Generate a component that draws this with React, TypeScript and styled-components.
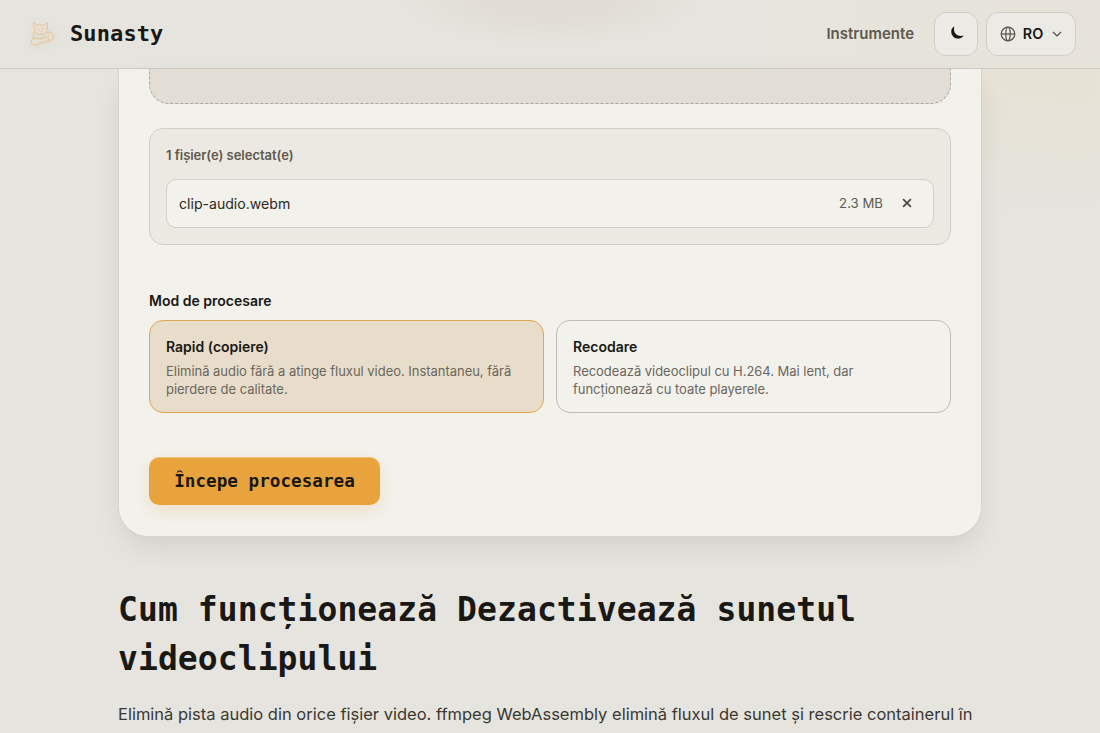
import React from 'react';
import styled, { createGlobalStyle } from 'styled-components';

const SANS = "Inter, 'Liberation Sans', sans-serif";
const MONO = "'DejaVu Sans Mono', 'Liberation Mono', monospace";

interface Mode {
  id: string;
  title: string;
  description: string;
}

const MODES: Mode[] = [
  {
    id: 'copy',
    title: 'Rapid (copiere)',
    description:
      'Elimină audio fără a atinge fluxul video. Instantaneu, fără pierdere de calitate.',
  },
  {
    id: 'encode',
    title: 'Recodare',
    description:
      'Recodează videoclipul cu H.264. Mai lent, dar funcționează cu toate playerele.',
  },
];

const CatLogo = () => (
  <CatSvg viewBox="0 0 28 30">
    <path d="M6.6 10.5 5.4 3.4l4.4 2.9c2-.5 4.2-.5 5.8 0l4-2.8-.6 6.8c.3 3-2.4 5.2-6.2 5.2-4 0-6.8-2.1-6.2-5Z" />
    <path d="m9 9.6 2 .7m5-.7-2 .7m-2.4 2 .9.6.9-.6" />
    <path d="M6.6 13.2c-1.500 2.200-1.700 4.800-.900 7m13.200-7.600c1.700 1.800 2.200 3.700 1.900 5.700" />
    <path d="M19.2 13.6c3.4-1.6 6.5.5 6 4.4-.4 2.6-2.6 4-5.8 4.200" />
    <path d="M3.700 20.400c2.400-1.700 4.900-1 7.600-.5 2.900.5 4.800-2.500 7.600-1.500 2.400.9 1.900 3.300-.7 4.200-3 1-5.700.8-8.300 2.600-2 1.400-5.200 1.100-6.100-.7-.7-1.400-.8-2.800-.1-4.100Z" />
  </CatSvg>
);

const App: React.FC = () => {
  const [mode, setMode] = React.useState('copy');

  return (
    <>
      <GlobalStyle />
      <Page>
        <Header>
          <Brand>
            <CatLogo />
            Sunasty
          </Brand>
          <Nav>
            <NavLink>Instrumente</NavLink>
            <ThemeButton title="Temă">
              <MoonSvg viewBox="0 0 16 16">
                <path d="M4.600 1.200C2.200 2.600.9 5.100 1.400 8.300c.6 3.700 3.600 6.200 7.100 6.200 2.600 0 4.900-1.200 6.100-3.400-2.900 1-6 .6-8.100-1.300C4.300 7.800 3.700 4.300 4.600 1.200Z" />
              </MoonSvg>
            </ThemeButton>
            <LanguageButton>
              <svg
                width="16"
                height="16"
                viewBox="0 0 16 16"
                fill="none"
                stroke="#5d594e"
                strokeWidth="1.3"
              >
                <circle cx="8" cy="8" r="6.8" />
                <ellipse cx="8" cy="8" rx="2.2" ry="6.8" />
                <path d="M1.2 8h13.6" />
              </svg>
              RO
              <svg
                width="10"
                height="6"
                viewBox="0 0 10 6"
                fill="none"
                stroke="#4a473e"
                strokeWidth="1.1"
              >
                <path d="m1 1 4 4 4-4" />
              </svg>
            </LanguageButton>
          </Nav>
        </Header>
        <Main>
          <ToolCard>
            <DropZone />
            <FilePanel>
              <FileCount>1 fișier(e) selectat(e)</FileCount>
              <FileRow>
                <FileName>clip-audio.webm</FileName>
                <FileSize>2.3 MB</FileSize>
                <RemoveButton title="Elimină">
                  <svg width="10" height="10" viewBox="0 0 10 10">
                    <path
                      d="m1.1 1.1 7.8 7.8m0-7.8L1.1 8.9"
                      stroke="#4a473e"
                      strokeWidth="1.7"
                    />
                  </svg>
                </RemoveButton>
              </FileRow>
            </FilePanel>
            <FieldLabel>Mod de procesare</FieldLabel>
            <ModeGrid>
              {MODES.map(({ id, title, description }) => (
                <ModeOption
                  key={id}
                  $active={mode === id}
                  onClick={() => setMode(id)}
                >
                  <ModeTitle>{title}</ModeTitle>
                  <ModeText>{description}</ModeText>
                </ModeOption>
              ))}
            </ModeGrid>
            <StartButton>Începe procesarea</StartButton>
          </ToolCard>
          <Heading>Cum funcționează Dezactivează sunetul videoclipului</Heading>
          <Intro>
            Elimină pista audio din orice fișier video. ffmpeg WebAssembly
            elimină fluxul de sunet și rescrie containerul în
          </Intro>
        </Main>
      </Page>
    </>
  );
};

export default App;

const GlobalStyle = createGlobalStyle`
  * {
    box-sizing: border-box;
  }

  body {
    margin: 0;
    font-family: ${SANS};
    color: #191814;
    background-color: #e5e4df;
  }

  button {
    font-family: inherit;
    color: inherit;
    padding: 0;
    cursor: pointer;
  }
`;

const Page = styled.div`
  height: 733px;
  overflow: hidden;
  background: radial-gradient(
      ellipse 340px 200px at 1070px 20px,
      #e8e2d4 0%,
      rgba(231, 226, 213, 0.8) 50%,
      rgba(229, 228, 223, 0) 100%
    ),
    #e5e4df;
`;

const Header = styled.header`
  display: flex;
  align-items: center;
  justify-content: space-between;
  height: 69px;
  padding: 0 24px 1px 28px;
  border-bottom: 1px solid #cbcac4;
  background: radial-gradient(
      ellipse 150px 46px at 550px 0,
      #e0dcd4 0%,
      rgba(224, 220, 212, 0.75) 50%,
      rgba(226, 225, 218, 0) 100%
    ),
    rgba(230, 229, 222, 0.6);
`;

const Brand = styled.div`
  display: flex;
  align-items: center;
  gap: 14px;
  font-family: ${MONO};
  font-size: 22px;
  font-weight: 700;
  letter-spacing: 0.1px;
`;

const CatSvg = styled.svg`
  width: 28px;
  height: 30px;
  fill: rgba(240, 226, 203, 0.35);
  stroke: #e9bd82;
  stroke-width: 0.8;
  filter: drop-shadow(0 2px 5px rgba(170, 160, 140, 0.3));
`;

const Nav = styled.nav`
  display: flex;
  align-items: center;
`;

const NavLink = styled.a`
  margin-right: 20px;
  font-size: 15px;
  font-weight: 600;
  color: #5d594e;
`;

const ThemeButton = styled.button`
  display: flex;
  align-items: center;
  justify-content: center;
  width: 44px;
  height: 44px;
  border: 1px solid #d0cec7;
  border-radius: 12px;
  background-color: #eceae4;
`;

const MoonSvg = styled.svg`
  width: 15px;
  height: 15px;
  margin: 0 0 2px 3px;
  fill: #191814;
`;

const LanguageButton = styled(ThemeButton)`
  gap: 7px;
  width: 90px;
  margin-left: 8px;
  font-size: 14.4px;
  font-weight: 600;

  svg:last-child {
    margin-left: 2px;
  }
`;

const Main = styled.main`
  width: 864px;
  margin: 0 auto;
`;

const ToolCard = styled.section`
  height: 468px;
  margin: 0 0 48px;
  padding: 0 30px;
  border: 1px solid #d6d4cd;
  border-top: none;
  border-radius: 0 0 30px 30px;
  background-color: #f2f1ec;
  box-shadow: 0 12px 28px -6px rgba(60, 55, 40, 0.14);
`;

const DropZone = styled.div`
  height: 35px;
  border: 1px dashed #aaa79f;
  border-top: none;
  border-radius: 0 0 20px 20px;
  background-color: #e2ded6;
`;

const FilePanel = styled.div`
  height: 117px;
  margin-top: 24px;
  padding: 17px 16px 16px;
  border: 1px solid #cfcec8;
  border-radius: 14px;
  background-color: #ece9e2;
`;

const FileCount = styled.div`
  height: 33px;
  font-size: 13px;
  font-weight: 600;
  line-height: 18px;
  letter-spacing: -0.04px;
  color: #5d594e;
`;

const FileRow = styled.div`
  display: flex;
  align-items: center;
  height: 49px;
  padding: 0 12px;
  border: 1px solid #d2d0c9;
  border-radius: 10px;
  background-color: #f2f1ec;
`;

const FileName = styled.span`
  flex: 1;
  font-size: 14.1px;
  color: #2b2922;
`;

const FileSize = styled.span`
  margin-bottom: 1px;
  font-size: 13.2px;
  color: #5d594e;
`;

const RemoveButton = styled.button`
  display: flex;
  align-items: center;
  justify-content: center;
  width: 28px;
  height: 28px;
  margin: 0 0 2px 10px;
  border: none;
  background: none;
`;

const FieldLabel = styled.div`
  margin-top: 46px;
  font-size: 14px;
  font-weight: 600;
  line-height: 20px;
`;

const ModeGrid = styled.div`
  display: grid;
  grid-template-columns: 1fr 1fr;
  gap: 12px;
  margin-top: 9px;
`;

const ModeOption = styled.button<{ $active: boolean }>`
  height: 93px;
  padding: 16px;
  border: 1px solid ${props => (props.$active ? '#e0a651' : '#bcbab4')};
  border-radius: 14px;
  text-align: left;
  background-color: ${props => (props.$active ? '#e8ddca' : '#f2f1ec')};
`;

const ModeTitle = styled.div`
  font-size: 14px;
  font-weight: 600;
  line-height: 20px;
`;

const ModeText = styled.div`
  margin-top: 5px;
  font-size: 13px;
  line-height: 18px;
  letter-spacing: -0.03px;
  color: #6b675c;
`;

const StartButton = styled.button`
  width: 231px;
  height: 48px;
  margin-top: 44px;
  border: none;
  border-radius: 10px;
  font-family: ${MONO};
  font-size: 17.6px;
  font-weight: 700;
  letter-spacing: 0.03px;
  background-color: #e8a33d;
  box-shadow: inset 0 1px 0 rgba(255, 255, 255, 0.3),
    0 6px 16px rgba(232, 163, 61, 0.2);
`;

const Heading = styled.h2`
  margin: 0;
  font-family: ${MONO};
  font-size: 33px;
  font-weight: 700;
  line-height: 49px;
  letter-spacing: 0.08px;
`;

const Intro = styled.p`
  margin: 17px 0 0;
  font-size: 16.5px;
  line-height: 28px;
  color: #3b3931;
  white-space: nowrap;
`;
